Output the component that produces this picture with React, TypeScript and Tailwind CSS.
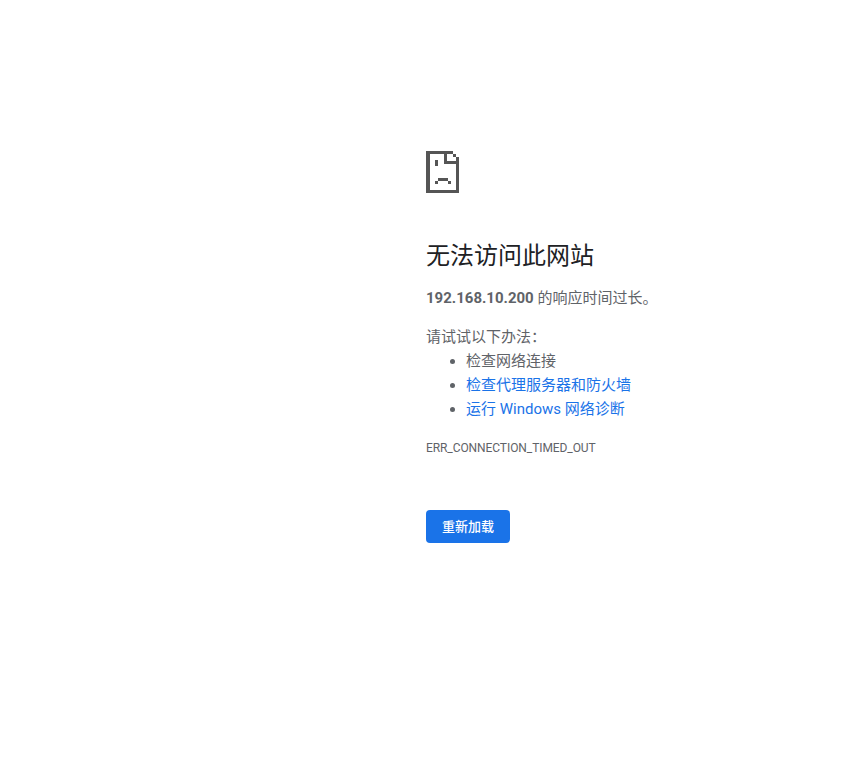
export default function App() {
  return (
    <div className="min-h-[766px] bg-white text-[#5f6368] text-[15px] leading-[24px]" style={{ fontFamily: "Roboto, 'Noto Sans CJK SC', sans-serif" }}>
      <div className="ml-[426px] w-[400px] pt-[151px]">
        <svg width="33" height="42" viewBox="0 0 33 42" className="block" shapeRendering="crispEdges" fill="#555555">
          <rect x="0" y="0" width="27" height="3" />
          <rect x="0" y="0" width="4" height="42" />
          <rect x="0" y="39" width="33" height="3" />
          <rect x="30" y="9" width="3" height="33" />
          <rect x="18" y="0" width="3" height="13" />
          <rect x="18" y="10" width="14" height="3" />
          <rect x="27" y="3" width="3" height="3" />
          <rect x="30" y="6" width="3" height="3" />
          <rect x="9" y="9" width="3" height="6" />
          <rect x="12" y="27" width="10" height="3" />
          <rect x="9" y="30" width="3" height="3" />
          <rect x="22" y="30" width="3" height="3" />
        </svg>
        <h1 className="mt-[45px] text-[24px] leading-[36px] font-normal text-[#202124]">无法访问此网站</h1>
        <p className="mt-[12px]"><b className="font-bold">192.168.10.200</b> 的响应时间过长。</p>
        <p className="mt-[15px]">请试试以下办法：</p>
        <ul className="list-disc pl-[40px]">
          <li>检查网络连接</li>
          <li><span className="text-[#1a73e8]">检查代理服务器和防火墙</span></li>
          <li><span className="text-[#1a73e8]">运行 Windows 网络诊断</span></li>
        </ul>
        <div className="mt-[19px] text-[12px] leading-[16px] tracking-[-0.08px]">ERR_CONNECTION_TIMED_OUT</div>
        <button className="mt-[54px] block h-[33px] w-[84px] rounded-[4px] bg-[#1a73e8] text-[13px] font-medium text-white">重新加载</button>
      </div>
    </div>
  );
}
